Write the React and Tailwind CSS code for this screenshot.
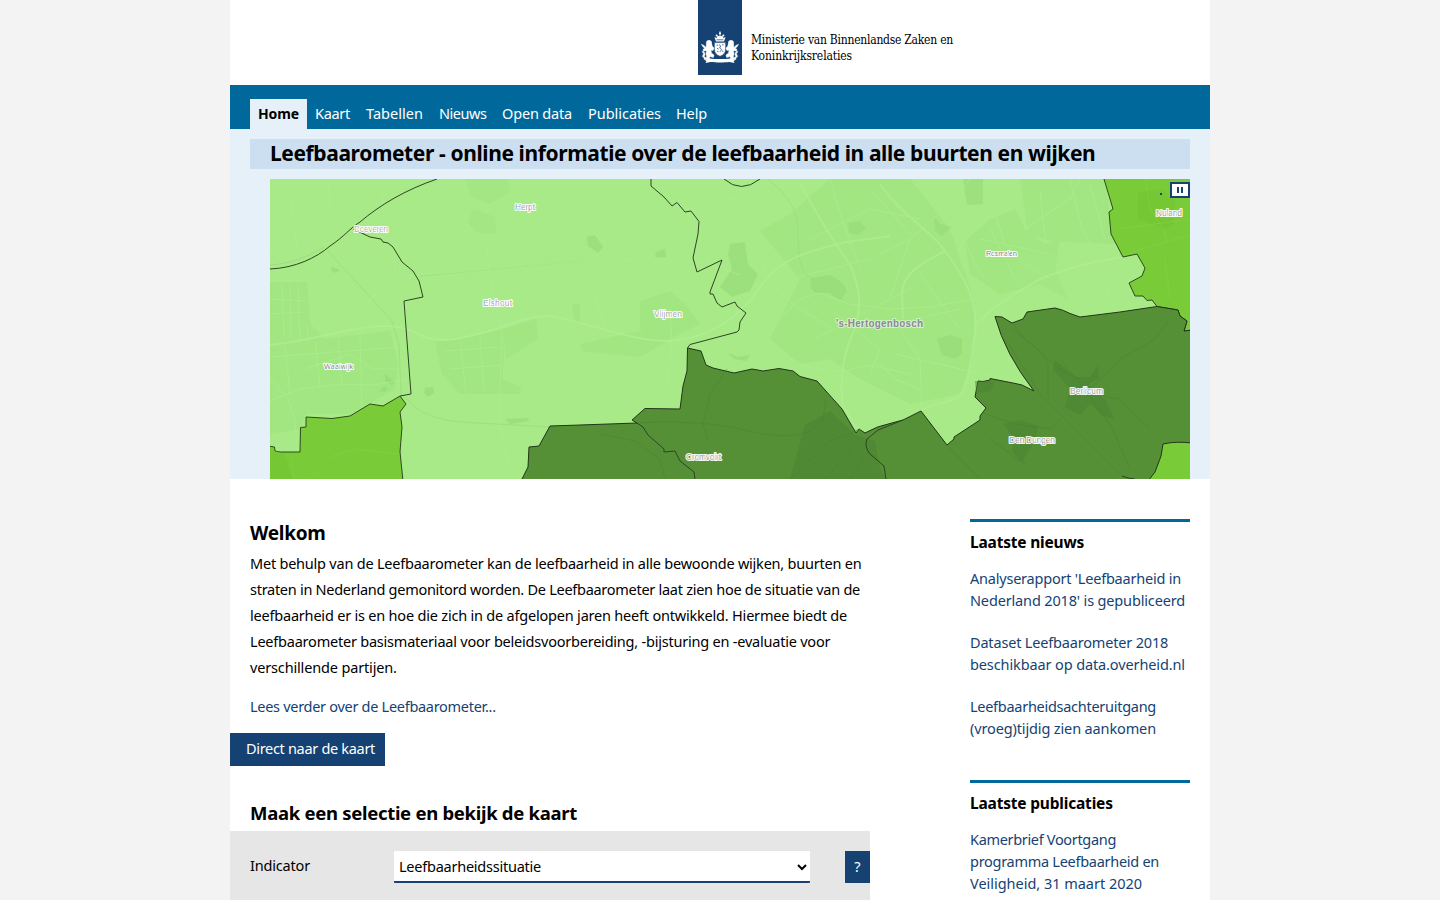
const SANS = "font-['Noto_Sans','Open_Sans',sans-serif]";

const navItems = [
  { label: 'Kaart', box: 'w-[51px]', track: 'tracking-[-0.29px]' },
  { label: 'Tabellen', box: 'w-[73px]', track: 'tracking-[0.03px]' },
  { label: 'Nieuws', box: 'w-[63px]', track: 'tracking-[-0.45px]' },
  { label: 'Open data', box: 'w-[86px]', track: 'tracking-[-0.17px]' },
  { label: 'Publicaties', box: 'w-[88px]', track: 'tracking-[-0.03px]' },
  { label: 'Help', box: 'w-[47px]', track: 'tracking-[-0.14px]' },
];

const intro = [
  ['Met behulp van de Leefbaarometer kan de leefbaarheid in alle bewoonde wijken, buurten en', 'tracking-[-0.22px]'],
  ['straten in Nederland gemonitord worden. De Leefbaarometer laat zien hoe de situatie van de', 'tracking-[-0.277px]'],
  ['leefbaarheid er is en hoe die zich in de afgelopen jaren heeft ontwikkeld. Hiermee biedt de', 'tracking-[-0.205px]'],
  ['Leefbaarometer basismateriaal voor beleidsvoorbereiding, -bijsturing en -evaluatie voor', 'tracking-[-0.217px]'],
  ['verschillende partijen.', 'tracking-[-0.157px]'],
];

const news = [
  [["Analyserapport 'Leefbaarheid in", 'tracking-[-0.217px]'], ["Nederland 2018' is gepubliceerd", 'tracking-[-0.154px]']],
  [['Dataset Leefbaarometer 2018', 'tracking-[-0.173px]'], ['beschikbaar op data.overheid.nl', 'tracking-[-0.115px]']],
  [['Leefbaarheidsachteruitgang', 'tracking-[-0.277px]'], ['(vroeg)tijdig zien aankomen', 'tracking-[-0.134px]']],
];

const publications = [
  [
    ['Kamerbrief Voortgang', 'tracking-[-0.327px]'],
    ['programma Leefbaarheid en', 'tracking-[-0.28px]'],
    ['Veiligheid, 31 maart 2020', 'tracking-[-0.022px]'],
  ],
];

function Lion() {
  return (
    <g stroke="#fff" strokeWidth="0.5" strokeLinejoin="round">
      <circle cx="8" cy="12" r="2.7" />
      <path d="M5.4 13.5 L10.6 12.8 L11.4 15.4 L13.4 17 L12 19.4 L10 19 L10.4 22 L13 24 L12.4 26.4 L9 25.6 L7.6 28.8 L3.2 28.6 L3.4 27 L5.8 26.4 L5 22.6 L5.6 19.4 L2.4 20.2 L2 18.4 L5 16.6 Z" />
      <path d="M3.4 27.6 L1.4 25.4 L2.6 22.6 L1 20.6 L3 20.8 L4.2 23.2 L3.2 25.2 L4.4 26.8 Z" />
      <path d="M0.4 13.4 L2.8 14.2 L5 16.6 L3.4 17.2 L1.8 15.4 Z" />
    </g>
  );
}

function Emblem() {
  return (
    <svg className="h-[33px] w-[38px]" viewBox="0 0 38 33" fill="#fff">
      <Lion />
      <g transform="translate(38 0) scale(-1 1)">
        <Lion />
      </g>
      <path d="M13.4 11.6 H24.6 V18 C24.6 22 22.4 24 19 25.2 C15.6 24 13.4 22 13.4 18 Z" stroke="#154273" strokeWidth="0.5" />
      <path
        d="M15.6 14.2 h1.6 M21 13.8 h1.6 M16 20.4 h1.4 M21 20.2 h1.4 M18 13.6 l1.8 1.4 l-1.2 2 l2.2 1.6 l-2 2.4 M16 17.2 l1.6 1"
        stroke="#154273"
        strokeWidth="0.7"
        fill="none"
      />
      <path d="M15 10.4 L13.4 6 L15.6 7 L16.6 4.4 L18.2 5.6 L19 2.8 L19.8 5.6 L21.4 4.4 L22.4 7 L24.6 6 L23 10.4 Z" />
      <circle cx="19" cy="2.4" r="1.1" />
      <circle cx="15.6" cy="4.6" r="1" />
      <circle cx="22.4" cy="4.6" r="1" />
      <path d="M18.7 0 h0.6 v2 h-0.6z" />
      <path d="M15.4 8.8 h7.2" stroke="#154273" strokeWidth="0.7" />
      <path d="M4 29 L8.2 27.2 C14 28.4 24 28.4 29.8 27.2 L34 29 L32.6 30.2 L33.6 32 L28.4 31 C23 31.6 15 31.6 9.6 31 L4.4 32 L5.4 30.2 Z" />
    </svg>
  );
}

const darkRegion =
  'M251 302 L258 288 L259 268 L269 267 L280 247 L310 246 L367 244 L362 241 L375 229.5 L410 230 L413 207 L417 192 L417.5 169 L431 172 L436 186 L443 189 L464 194 L482 190 L493 192 L509 189.5 L523 192 L530 197.5 L547 202 L572 230 L586 254 L589 250 L595 254 Q607 247 620 244.5 L633 241 L651 232 L677 266 L684 260 L684 258 L710 241 L710 237 L716 229 L705 218 L708 202 L713 202.5 L720 201 L720 199.5 L743 204 L752 206 L764 212 Q735 175 725 137.5 L732 138 L742 144 L753 140 L757 133 L785 129 Q794 131 800 134.5 L810 138 L850 133 L887 127.5 L908 131 L910 137 L917 142 L914 152 L922 151 L922 302 Z';

const midRegions = [
  'M-2 267 L4.5 268 L5 272 L10 273 L30 273 L30.5 248.5 L36 248 L36 238 L62 239.5 L80 237 L100 225 L113 227 L130 217 L136 225 L130 233 L132 248 L130 273 L133 302 L-2 302 Z',
  'M834 -2 L834 0 L843 30 L839 33 L841 55 L853 78 L867 75 L875 89 L872 97 L859 104 L865 117 L873 117 L877 121.5 L882 121 L887 127.5 L908 131 L910 137 L917 142 L914 152 L922 151 L922 -2 Z',
  'M922 264 Q906 262 893 265 L891 277 L885 293 L878 302 L922 302 Z',
];

const borders = [
  'M0 90 C25 89 46 79 60 67 C75 57 79 50 90 43 C110 26 135 11 167 0',
  'M83 50 L100 58 L111 60 L113 63 L118 64 L123 68 L132 83 L143 92 L149 102 L153 118 L134 122 L141 215 L130 217',
  'M381 0 L381 7 L394 18 L402 27 L407 23.5 L415 33 L421 32 L429 42.5 L428 55 L423 79 L427 93 L452 81 L440 113 L440 115 L443 115 L447 124 L452 128 L465 123 L467 127 L476 134 L470 143 L469 151 L467 153 L420 165.5 L417.5 169',
  'M454 0 Q471 15 490 0',
  'M367 244 L373 248 L378 256 L394 270 L394 273 L405 272 L410 282 L424 293 L425 300',
  'M633 241 L608 251 L597 260 Q594 268 600 275 L614 287 L616 300',
  'M852 297 L858 299 L865 300',
];

const urbanLight = [
  'M0 103 L37 103 L40 145 L55 160 L120 152 L128 185 L125 210 L80 235 L36 235 L30 250 L0 255 Z',
  'M165 162 L190 160 L233 150 L234 180 L232 200 L251 208 L250 215 L190 215 L172 195 Z',
  'M195 0 L237 0 L240 12 L220 25 L202 18 Z M203 30 L225 38 L226 55 L208 55 L198 44 Z',
  'M370 122 L400 112 L415 125 L430 145 L400 160 L370 150 Z M310 165 L380 150 L400 160 L370 178 L312 172 Z',
  'M490 52 L520 35 L560 0 L640 0 L680 50 L705 125 L702 180 L690 215 L640 225 L590 200 L560 180 L530 185 L500 160 L530 100 Z',
  'M695 62 L720 40 L745 30 L755 50 L775 65 L790 60 L785 90 L797 120 L770 105 L730 115 L700 95 Z',
  'M750 0 L835 0 L840 35 L845 65 L780 62 L758 55 Z',
  'M233 150 L266 140 L268 160 L236 180 Z M302 125 L310 125 L310 145 L304 143 Z',
];

const urbanDark = [
  'M785 181 L805 198 L820 198 L828 186 L829 199 L818 205 L836 222 L844 240 L832 236 L820 224 L810 236 L795 228 L800 210 L783 190 Z',
  'M733 245 L750 241 L768 247 L765 262 L752 283 L742 272 L744 258 Z',
  'M535 246 L560 232 L585 256 L605 262 L610 290 L616 300 L520 300 Z',
  'M705 202 L725 203 L720 212 L706 214 Z',
];

const water = [
  'M460 65 L475 63 L478 85 L488 95 L480 112 L462 118 L450 108 L462 90 L458 75 Z',
  'M541 99 L560 96 L573 104 L577 112 L570 122 L560 114 L545 114 L540 108 Z',
  'M667 160 L680 156 L692 160 L692 175 L685 180 L672 176 Z',
  'M317 58 L325 56 L333 68 L328 74 L318 67 Z M386 73 L395 70 L396 78 L385 79 Z M62 88 L70 91 L66 94 L61 92 Z',
  'M115 195 L125 203 L122 206 L115 202 Z M112 208 L118 208 L115 213 L110 212 Z M155 209 L163 208 L164 214 L158 218 L154 214 Z',
  'M235 240 L258 239 L259 242 L240 245 Z M458 174 L468 178 L480 176 L476 182 L464 180 Z',
  'M664 37 L670 45 L681 48 L672 57 L665 52 Z M693 0 L713 0 L713 25 L697 26 Z M578 44 L590 42 L596 50 L588 56 L579 54 Z',
];

const roadsWide = [
  'M0 166 C30 163 50 157 80 151 C110 146 130 144 150 156 C165 163 180 162 200 157 C235 150 250 137 280 137 C320 144 360 162 400 162 C440 160 470 136 485 115 C505 85 520 78 560 67 C580 60 600 61 620 57',
  'M610 5 C630 35 665 55 675 72 C700 105 706 125 706 150 C700 180 700 205 690 217 C680 225 660 224 650 232',
  'M675 72 C650 85 632 95 632 115 L633 140 M706 145 C730 122 745 115 770 100 C800 88 820 83 853 78 L920 60',
  'M530 5 C545 30 560 60 580 85 C590 110 592 125 585 150 C575 170 570 190 572 225 L590 255 L593 300',
];

const roadsThin = [
  'M170 0 C175 30 190 45 215 58 C250 85 268 95 275 135 M215 58 L222 112 L232 148 L229 240 L238 285 L275 272',
  'M32 0 L22 25 L27 70 L20 80 M0 70 L16 79 M58 0 L60 30 L40 40 L8 58 L8 45 M113 12 L112 30 L125 45 L124 125',
  'M0 102 L35 101 L60 83 L80 74 L85 52 M20 105 L21 160 M37 145 L38 162 M55 138 L90 130 L103 118 L124 98 L200 92 L310 82',
  'M0 198 L18 220 L25 240 L27 272 M0 222 L30 210 L70 205 L103 206 L140 200 M35 190 L80 175 L103 190 L140 190',
  'M310 40 C325 60 345 70 355 62 L372 45 L385 38 L460 20 L500 12 M385 5 L410 30 L440 40 L452 53 L440 75 L430 110 M310 110 L325 115 L335 150',
  'M315 100 L360 80 L380 78 L440 85 L470 96 M360 80 L375 95 L410 115 M310 200 L333 212 L345 230 L362 241 M400 130 L402 165 L395 215',
  'M455 50 L480 60 L492 75 L495 95 L508 112 L530 130 L560 148 M495 160 L510 140 L530 120 L550 114 L580 125 L620 130 M470 152 L500 162 L520 180 L545 190 L575 192 L600 186 L640 195',
  'M560 0 L572 40 L590 90 M610 75 L640 60 L680 25 L700 0 M620 130 L660 128 L705 120 M625 175 L690 190 L740 200 M610 185 L625 200 L650 210 M630 150 L650 180 L652 232',
  'M695 62 L715 40 L726 38 L735 65 L752 80 L765 92 L780 100 M695 62 L705 85 L715 100 M755 50 L800 20 L810 0 M800 0 L812 50 L830 80 L840 120',
  'M0 120 L36 122 M0 135 L36 133 M12 104 L14 158 M28 104 L30 160 M0 178 L128 168 M45 162 L50 208 M68 158 L72 205 M90 156 L92 235 M15 165 L20 215',
  'M175 172 L230 168 M180 190 L232 186 M190 162 L196 214 M210 158 L214 212',
  'M540 60 L600 30 L650 40 M520 100 L600 80 M545 160 L640 110 M600 150 L690 130 M560 130 L610 170 L600 195 M640 60 L620 120 M650 95 L690 150 M600 10 L640 55',
  'M710 60 L780 75 M720 50 L745 100 M770 10 L775 60 M820 5 L835 60',
];

const roadsDark = [
  'M367 244 C400 242 440 243 470 250 C500 257 520 260 540 252 L553 240 L556 220 M457 190 L440 215 L433 245 L438 262 M330 255 L365 262 L390 280 L395 300',
  'M742 150 L770 172 L778 185 L778 220 M735 160 L745 175 L770 215 L810 255 L850 295 M770 215 L800 245 M790 180 L815 210 L840 245 L860 290',
  'M742 144 L755 160 L790 190 L810 200 M820 210 L850 180 L885 160 L900 140 M820 215 L850 220 L880 250 M712 234 L745 245 L780 250 L790 240',
  'M520 300 L560 262 L590 250 M555 300 L588 262 M677 266 L700 290 L710 300 M755 285 L720 260 M600 270 L580 300',
];

const places = [
  ['Herpt', 245, 30.5, 20, 8.5, '#aaa2ad'],
  ['Doeveren', 84, 53, 34, 8.5, '#b5b5b5'],
  ['Elshout', 213, 127, 29, 8.5, '#b0a8b4'],
  ['Vlijmen', 384, 138, 28, 8.5, '#aaaaaa'],
  ['Waalwijk', 54, 190, 29, 7.5, '#858585'],
  ['Rosmalen', 716, 77, 31, 7.5, '#858585'],
  ['Nuland', 886, 36.5, 26, 8.5, '#a4a4a4'],
  ['Berlicum', 800, 214.5, 33, 8.5, '#a4a4a4'],
  ['Den Dungen', 739, 264, 46, 9, '#a4a4a4'],
  ['Cromvoirt', 416, 280.5, 35, 8.5, '#a4a4a4'],
];

function MapBanner() {
  return (
    <svg className="block h-[300px] w-[920px]" viewBox="0 0 920 300">
      <rect width="920" height="300" fill="#a7ea87" />
      <g fill="#9fe37f" opacity="0.55">
        {urbanLight.map((d) => <path key={d} d={d} />)}
      </g>
      <g fill="#96da78" opacity="0.6">
        {water.map((d) => <path key={d} d={d} />)}
      </g>
      <g fill="none" stroke="#98da7b" strokeWidth="0.9" opacity="0.7">
        <path d="M58 72 L100 118 L122 142 L129 165 L131 215 L145 228 Q160 240 190 243 L280 248" />
        <path d="M498 0 Q530 25 528 55 Q528 85 535 95 L560 112 L580 125" />
        <path d="M0 86 C20 85 38 78 54 68 M150 97 L310 82" />
      </g>
      <g fill="none" stroke="#b0ee94" strokeWidth="2" opacity="0.7">
        {roadsWide.map((d) => <path key={d} d={d} />)}
      </g>
      <g fill="none" stroke="#b0ee94" strokeWidth="0.9" opacity="0.65">
        {roadsThin.map((d) => <path key={d} d={d} />)}
      </g>
      <g fill="#7acb38" stroke="#2f4a1e" strokeWidth="1">
        {midRegions.map((d) => <path key={d} d={d} />)}
      </g>
      <path d="M868 14 L890 10 L905 20 L903 45 L895 50 L868 40 Z M0 270 L15 275 L22 300 L0 300 Z" fill="#70c02f" opacity="0.4" />
      <g fill="none" stroke="#84d245" strokeWidth="1" opacity="0.6">
        <path d="M853 76 C870 70 900 62 920 56 M875 0 L880 30 L892 48 L897 62 M850 50 L920 40 M895 80 L900 120 M22 280 L24 300 M40 300 L60 278 L85 270 L130 275" />
      </g>
      <path d={darkRegion} fill="#559037" stroke="#23351a" strokeWidth="1" />
      <g fill="#4b8330" opacity="0.5">
        {urbanDark.map((d) => <path key={d} d={d} />)}
      </g>
      <g fill="none" stroke="#4b8330" strokeWidth="0.9" opacity="0.6">
        {roadsDark.map((d) => <path key={d} d={d} />)}
      </g>
      <path d={midRegions[2]} fill="#7acb38" stroke="#23351a" />
      <g fill="none" stroke="#2f4426" strokeWidth="1">
        {borders.map((d) => <path key={d} d={d} />)}
      </g>
      <g
        fontFamily="'Liberation Sans', Arial, sans-serif"
        stroke="#fff"
        strokeWidth="2.2"
        strokeLinejoin="round"
        strokeOpacity="0.95"
        paintOrder="stroke"
      >
        {places.map(([name, x, y, width, size, color]) => (
          <text key={name} x={x} y={y} fontSize={size} fill={color} textLength={width}>
            {name}
          </text>
        ))}
        <text x="566" y="147.5" fontSize="10" fontWeight="bold" fill="#8f8797" strokeOpacity="0.5" textLength="87">
          's-Hertogenbosch
        </text>
      </g>
      <rect x="890" y="14" width="2" height="2" fill="#154273" />
    </svg>
  );
}

function SideSection({ title, titleClass, items, className }) {
  return (
    <section className={`border-t-[3px] border-[#01689b] ${className}`}>
      <h3 className={`pt-[9px] text-[15.5px] leading-[22px] font-bold text-black ${titleClass}`}>{title}</h3>
      <ul className="flex flex-col gap-5 pt-3.5">
        {items.map((lines) => (
          <li key={lines[0][0]}>
            <a href="#" className="block leading-[22px] text-[#154273]">
              {lines.map(([text, track]) => (
                <span key={text} className={`block whitespace-nowrap ${track}`}>{text}</span>
              ))}
            </a>
          </li>
        ))}
      </ul>
    </section>
  );
}

export default function App() {
  return (
    <div className={`flex h-[900px] justify-center overflow-hidden bg-[#f3f3f3] text-[14.5px] text-black ${SANS}`}>
      <div className="w-[980px] bg-white">
        <header className="flex h-[85px] pl-[468px]">
          <div className="flex h-[75px] w-11 items-start justify-center bg-[#154273] pt-[31px]">
            <Emblem />
          </div>
          <div className="pt-8 pl-[9px] font-['DejaVu_Serif_Condensed','DejaVu_Serif',serif] text-[12px] leading-4 whitespace-nowrap">
            <span className="block tracking-[-0.246px]">Ministerie van Binnenlandse Zaken en</span>
            <span className="block tracking-[-0.123px]">Koninkrijksrelaties</span>
          </div>
        </header>

        <nav className="flex h-11 items-end bg-[#01689b] pl-5 leading-[28px] whitespace-nowrap text-white">
          <a href="#" className="h-[30px] w-[57px] bg-[#e5f0f9] pl-2 text-[14px] leading-[30px] font-bold tracking-[-0.12px] text-black">Home</a>
          {navItems.map(({ label, box, track }) => (
            <a key={label} href="#" className={`h-[30px] pl-2 ${box} ${track}`}>{label}</a>
          ))}
        </nav>

        <div className="h-[350px] bg-[#e5f0f9] pt-2.5 pr-5 pl-5">
          <h1 className="h-[30px] bg-[#ccdff1] pl-5 text-[21px] leading-[29px] font-bold tracking-[-0.397px] whitespace-nowrap">
            Leefbaarometer - online informatie over de leefbaarheid in alle buurten en wijken
          </h1>
          <div className="relative mt-2.5 ml-5">
            <MapBanner />
            <button className="absolute top-[3px] right-0 flex h-4 w-5 items-center justify-center gap-0.5 border-2 border-[#154273] bg-white">
              <span className="h-1.5 w-0.5 bg-[#154273]" />
              <span className="h-1.5 w-0.5 bg-[#154273]" />
            </button>
          </div>
        </div>

        <div className="flex justify-between pr-5">
          <main className="w-[640px] pt-10">
            <div className="pl-5 whitespace-nowrap">
              <h2 className="text-[19px] leading-7 font-bold tracking-[-0.28px]">Welkom</h2>
              <p className="pt-[3px] leading-[26px]">
                {intro.map(([text, track]) => (
                  <span key={text} className={`block ${track}`}>{text}</span>
                ))}
              </p>
              <a href="#" className="mt-[13px] block leading-[26px] tracking-[-0.29px] text-[#154273]">
                Lees verder over de Leefbaarometer...
              </a>
            </div>
            <a href="#" className="mt-3.5 block h-[33px] w-[155px] bg-[#154273] pl-4 leading-[30px] tracking-[-0.313px] whitespace-nowrap text-white">
              Direct naar de kaart
            </a>
            <h2 className="mt-[33px] pl-5 text-[18.5px] leading-7 font-bold tracking-[-0.293px] whitespace-nowrap">
              Maak een selectie en bekijk de kaart
            </h2>
            <form className="mt-1 flex h-[90px] items-start bg-[#e6e6e6] pt-5 pl-5">
              <label htmlFor="indicator" className="w-36 leading-[28px] tracking-[-0.182px]">Indicator</label>
              <select
                id="indicator"
                className="h-8 w-[416px] rounded-[1px] border-b-2 border-[#154273] bg-white pr-px pl-px tracking-[-0.24px]"
              >
                <option>Leefbaarheidssituatie</option>
              </select>
              <button type="button" className="ml-[35px] h-8 w-[25px] bg-[#154273] text-white">?</button>
            </form>
          </main>

          <aside className="w-[220px] pt-10">
            <SideSection title="Laatste nieuws" titleClass="tracking-[-0.2px]" items={news} className="h-[261px]" />
            <SideSection title="Laatste publicaties" titleClass="tracking-[-0.19px]" items={publications} className="" />
          </aside>
        </div>
      </div>
    </div>
  );
}
